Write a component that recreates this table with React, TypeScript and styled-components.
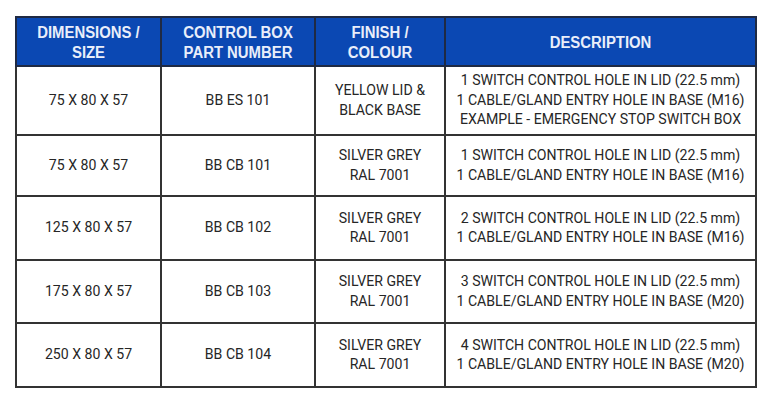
import React from "react";
import styled, { createGlobalStyle } from "styled-components";

const Global = createGlobalStyle`
  html, body { margin: 0; padding: 0; background: #ffffff; }
  body { font-family: Roboto, "Liberation Sans", sans-serif; }
`;

const Page = styled.div`
  padding: 16px 0 0 15px;
  width: 768px;
  height: 410px;
  box-sizing: border-box;
`;

const Table = styled.table`
  border-collapse: collapse;
  table-layout: fixed;
  width: 740px;
`;

const Col = styled.col<{ $w: number }>`
  width: ${(p) => p.$w}px;
`;

const HeadCell = styled.th`
  background: #0b48b3;
  color: #e9eefa;
  font-family: "Liberation Sans", Arial, sans-serif;
  font-weight: 700;
  font-size: 16px;
  line-height: 20px;
  text-align: center;
  vertical-align: middle;
  white-space: nowrap;
  border: 2px solid #1f2a44;
  height: 49px;
  padding: 2px 0 0;
  box-sizing: border-box;
  overflow: visible;
`;

const Cell = styled.td<{ $h: number }>`
  color: #262626;
  font-family: Roboto, "Liberation Sans", sans-serif;
  font-size: 15.5px;
  line-height: 19.5px;
  text-align: center;
  vertical-align: middle;
  white-space: nowrap;
  border: 2px solid #333333;
  height: ${(p) => p.$h}px;
  padding: 0;
  box-sizing: border-box;
  overflow: visible;
`;

const Squeeze = styled.div<{ $x: number }>`
  margin: 0 -30px;
  text-align: center;
  transform: scaleX(${(p) => p.$x});
  transform-origin: center;
`;

const rows = [
  { h: 69, dim: "75 X 80 X 57", part: "BB ES 101", finish: ["YELLOW LID &", "BLACK BASE"], desc: ["1 SWITCH CONTROL HOLE IN LID (22.5 mm)", "1 CABLE/GLAND ENTRY HOLE IN BASE (M16)", "EXAMPLE - EMERGENCY STOP SWITCH BOX"] },
  { h: 61, dim: "75 X 80 X 57", part: "BB CB 101", finish: ["SILVER GREY", "RAL 7001"], desc: ["1 SWITCH CONTROL HOLE IN LID (22.5 mm)", "1 CABLE/GLAND ENTRY HOLE IN BASE (M16)"] },
  { h: 64, dim: "125 X 80 X 57", part: "BB CB 102", finish: ["SILVER GREY", "RAL 7001"], desc: ["2 SWITCH CONTROL HOLE IN LID (22.5 mm)", "1 CABLE/GLAND ENTRY HOLE IN BASE (M16)"] },
  { h: 63, dim: "175 X 80 X 57", part: "BB CB 103", finish: ["SILVER GREY", "RAL 7001"], desc: ["3 SWITCH CONTROL HOLE IN LID (22.5 mm)", "1 CABLE/GLAND ENTRY HOLE IN BASE (M20)"] },
  { h: 64, dim: "250 X 80 X 57", part: "BB CB 104", finish: ["SILVER GREY", "RAL 7001"], desc: ["4 SWITCH CONTROL HOLE IN LID (22.5 mm)", "1 CABLE/GLAND ENTRY HOLE IN BASE (M20)"] },
];

const Lines = ({ items, x = 0.91 }: { items: string[]; x?: number }) => (
  <Squeeze $x={x}>
    {items.map((t, i) => (
      <React.Fragment key={i}>
        {i > 0 && <br />}
        {t}
      </React.Fragment>
    ))}
  </Squeeze>
);

export default function App() {
  return (
    <Page>
      <Global />
      <Table>
        <colgroup>
          <Col $w={145} />
          <Col $w={154} />
          <Col $w={130} />
          <Col $w={311} />
        </colgroup>
        <thead>
          <tr>
            <HeadCell><Lines x={0.93} items={["DIMENSIONS /", "SIZE"]} /></HeadCell>
            <HeadCell><Lines x={0.93} items={["CONTROL BOX", "PART NUMBER"]} /></HeadCell>
            <HeadCell><Lines x={0.93} items={["FINISH /", "COLOUR"]} /></HeadCell>
            <HeadCell><Lines x={0.93} items={["DESCRIPTION"]} /></HeadCell>
          </tr>
        </thead>
        <tbody>
          {rows.map((r, i) => (
            <tr key={i}>
              <Cell $h={r.h}><Lines items={[r.dim]} /></Cell>
              <Cell $h={r.h}><Lines items={[r.part]} /></Cell>
              <Cell $h={r.h}><Lines items={r.finish} /></Cell>
              <Cell $h={r.h}><Lines items={r.desc} /></Cell>
            </tr>
          ))}
        </tbody>
      </Table>
    </Page>
  );
}
